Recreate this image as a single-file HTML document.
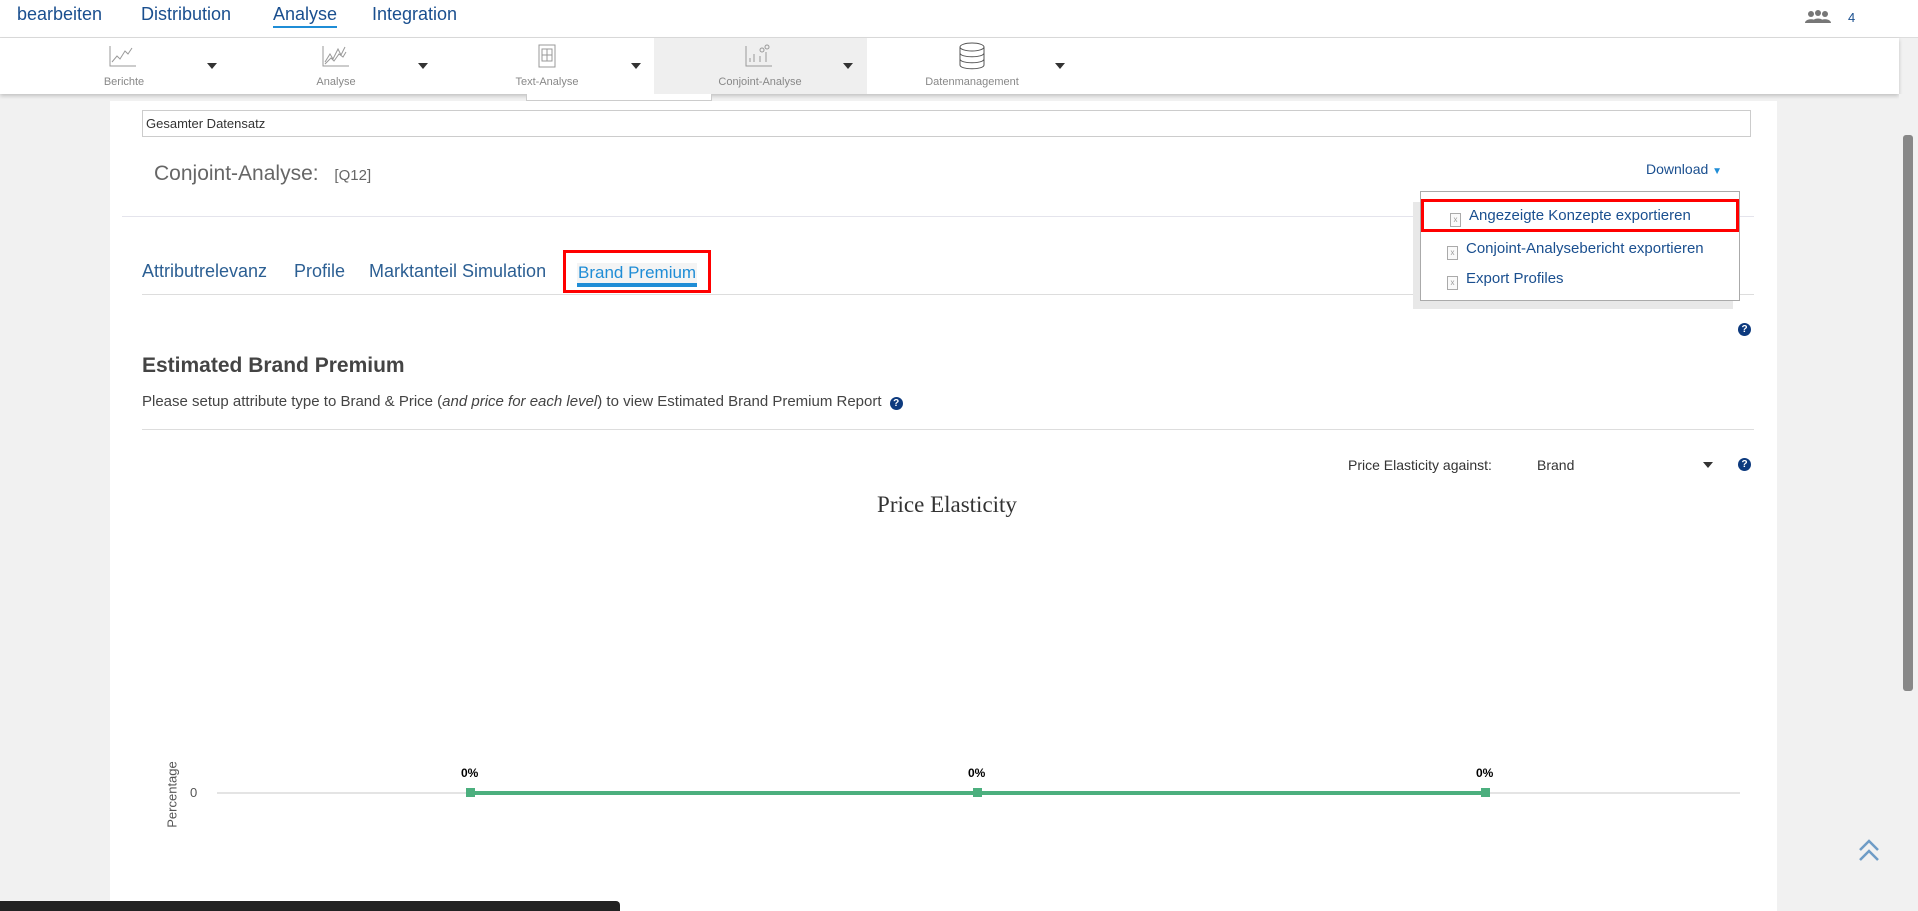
<!DOCTYPE html>
<html><head><meta charset="utf-8"><style>
*{margin:0;padding:0;box-sizing:border-box}
body{width:1918px;height:911px;overflow:hidden;background:#f1f1f1;font-family:"Liberation Sans",sans-serif;position:relative}
.a{position:absolute;white-space:nowrap}
.nav{color:#1a4f8f;font-size:18px;top:4px}
.tb{color:#888;font-size:11px;top:76px;transform:translateX(-50%)}
.arr{width:0;height:0;border-left:5px solid transparent;border-right:5px solid transparent;border-top:6px solid #333;top:63px}
.tab{color:#2c5f93;font-size:18px;top:261px}
.dd{color:#1a4f8f;font-size:15px}
.fi{display:inline-block;width:11px;height:14px;border:1px solid #aaa;background:#fafafa;margin-right:8px;vertical-align:-2px;font-size:8px;color:#999;text-align:center;line-height:12px}
.help{width:13px;height:13px;border-radius:50%;background:#0d3a7e;color:#fff;font-size:10px;font-weight:bold;text-align:center;line-height:13px}
</style></head><body>
<div class="a" style="left:0;top:0;width:1918px;height:38px;background:#fff;border-bottom:1px solid #ddd"></div>
<div class="a nav" style="left:17px">bearbeiten</div>
<div class="a nav" style="left:141px">Distribution</div>
<div class="a nav" style="left:273px;border-bottom:2px solid #1f8dd6;padding-bottom:1px">Analyse</div>
<div class="a nav" style="left:372px">Integration</div>
<svg class="a" style="left:1804px;top:10px" width="28" height="14" fill="#777"><circle cx="7" cy="4" r="3"/><circle cx="21" cy="4" r="3"/><circle cx="14" cy="3" r="3"/><path d="M1 13c0-5 12-5 12 0zM15 13c0-5 12-5 12 0zM8 13c0-6 12-6 12 0z"/></svg>
<div class="a" style="left:1848px;top:10px;color:#1a4f8f;font-size:13px">4</div>
<div class="a" style="left:0;top:38px;width:1899px;height:56px;background:#fff;box-shadow:0 2px 4px rgba(0,0,0,.2)"></div>
<div class="a" style="left:654px;top:38px;width:213px;height:56px;background:#efefef"></div>
<div class="a" style="left:526px;top:94px;width:186px;height:7px;border:1px solid #ccc;border-top:none;background:#fff"></div>
<svg class="a" style="left:0;top:42px" width="1100" height="32" fill="none" stroke="#999" stroke-width="1">
<path d="M110 4V24H136M112 20l5-6 3 3 5-8 3 3 4-6"/>
<path d="M323 4V24H349M325 20l5-8 3 5 5-10 3 6 4-8M325 22l6-6 3 3 5-7 4 3 3-5"/>
<rect x="539" y="3" width="16" height="22"/><path d="M542 7h10v12h-10zM547 7v12M542 13h10"/>
<path d="M746 4V24H772M750 20v-4M754 20v-8M760 20v-6M766 20v-10"/><circle cx="762" cy="8" r="2"/><circle cx="767" cy="5" r="2"/>
<ellipse cx="972" cy="5" rx="12" ry="4" stroke="#555"/><path d="M960 5v18c0 5 24 5 24 0V5M960 11c0 5 24 5 24 0M960 17c0 5 24 5 24 0" stroke="#555"/>
</svg>
<div class="a tb" style="left:124px">Berichte</div><div class="a arr" style="left:207px"></div>
<div class="a tb" style="left:336px">Analyse</div><div class="a arr" style="left:418px"></div>
<div class="a tb" style="left:547px">Text-Analyse</div><div class="a arr" style="left:631px"></div>
<div class="a tb" style="left:760px">Conjoint-Analyse</div><div class="a arr" style="left:843px"></div>
<div class="a tb" style="left:972px">Datenmanagement</div><div class="a arr" style="left:1055px"></div>
<div class="a" style="left:110px;top:101px;width:1667px;height:810px;background:#fff;z-index:-1"></div>
<div class="a" style="left:1899px;top:94px;width:19px;height:817px;background:#f1f1f1"></div>
<div class="a" style="left:1903px;top:135px;width:10px;height:556px;background:#888;border-radius:3px"></div>
<div class="a" style="left:142px;top:110px;width:1609px;height:27px;border:1px solid #ccc;font-size:13px;color:#333;padding:5px 3px">Gesamter Datensatz</div>
<div class="a" style="left:154px;top:162px;font-size:21px;color:#666">Conjoint-Analyse: <span style="font-size:15px;margin-left:10px">[Q12]</span></div>
<div class="a" style="left:1646px;top:161px;font-size:14px;color:#1a4f8f">Download <span style="color:#1f8dd6;font-size:10px">&#9660;</span></div>
<div class="a" style="left:122px;top:216px;width:1632px;height:1px;background:#e4e4ec"></div>
<div class="a tab" style="left:142px">Attributrelevanz</div>
<div class="a tab" style="left:294px">Profile</div>
<div class="a tab" style="left:369px">Marktanteil Simulation</div>
<div class="a tab" style="left:577px;color:#1f8dd6;top:263px;font-size:17px;border-bottom:4px solid #1f8dd6;background:#f4f4f4;padding:0 1px">Brand Premium</div>
<div class="a" style="left:563px;top:250px;width:148px;height:43px;border:3px solid #f00"></div>
<div class="a" style="left:142px;top:294px;width:1612px;height:1px;background:#ddd"></div>
<div class="a" style="left:1413px;top:202px;width:320px;height:107px;background:#e8e8e8"></div>
<div class="a" style="left:1420px;top:191px;width:320px;height:110px;border:1px solid #aaa;background:#fff"></div>
<div class="a" style="left:1421px;top:199px;width:318px;height:33px;border:3px solid #f00"></div>
<div class="a dd" style="left:1450px;top:207px"><span class="fi">x</span>Angezeigte Konzepte exportieren</div>
<div class="a dd" style="left:1447px;top:240px"><span class="fi">x</span>Conjoint-Analysebericht exportieren</div>
<div class="a dd" style="left:1447px;top:270px"><span class="fi">x</span>Export Profiles</div>
<div class="a help" style="left:1738px;top:323px">?</div>
<div class="a" style="left:142px;top:354px;font-size:21px;font-weight:bold;color:#444">Estimated Brand Premium</div>
<div class="a" style="left:142px;top:393px;font-size:15px;color:#444">Please setup attribute type to Brand &amp; Price (<i>and price for each level</i>) to view Estimated Brand Premium Report <span class="help" style="display:inline-block;margin-left:4px">?</span></div>
<div class="a" style="left:142px;top:429px;width:1612px;height:1px;background:#ddd"></div>
<div class="a" style="left:1348px;top:457px;font-size:14px;color:#333">Price Elasticity against:</div>
<div class="a" style="left:1537px;top:457px;font-size:14px;color:#333">Brand</div>
<div class="a" style="left:1703px;top:462px;border-left:5px solid transparent;border-right:5px solid transparent;border-top:6px solid #333"></div>
<div class="a help" style="left:1738px;top:458px">?</div>
<div class="a" style="left:947px;top:492px;transform:translateX(-50%);font-family:'Liberation Serif',serif;font-size:23px;color:#333">Price Elasticity</div>
<div class="a" style="left:217px;top:792px;width:1523px;height:2px;background:#e4e4e4"></div>
<div class="a" style="left:470px;top:791px;width:1015px;height:4px;background:#4caf7e"></div>
<div class="a" style="left:466px;top:788px;width:9px;height:9px;background:#4caf7e"></div>
<div class="a" style="left:973px;top:788px;width:9px;height:9px;background:#4caf7e"></div>
<div class="a" style="left:1481px;top:788px;width:9px;height:9px;background:#4caf7e"></div>
<div class="a" style="left:461px;top:766px;font-size:12px;font-weight:bold">0%</div>
<div class="a" style="left:968px;top:766px;font-size:12px;font-weight:bold">0%</div>
<div class="a" style="left:1476px;top:766px;font-size:12px;font-weight:bold">0%</div>
<div class="a" style="left:190px;top:785px;font-size:13px;color:#555">0</div>
<div class="a" style="left:130px;top:787px;transform:rotate(-90deg);font-size:13px;color:#555;width:84px;text-align:center">Percentage</div>
<svg class="a" style="left:1858px;top:838px" width="22" height="24" fill="none" stroke="#6e9cc6" stroke-width="2.5"><path d="M2 12l9-9 9 9M2 22l9-9 9 9"/></svg>
<div class="a" style="left:0;top:901px;width:620px;height:10px;background:#222;border-radius:0 4px 0 0"></div>
</body></html>
